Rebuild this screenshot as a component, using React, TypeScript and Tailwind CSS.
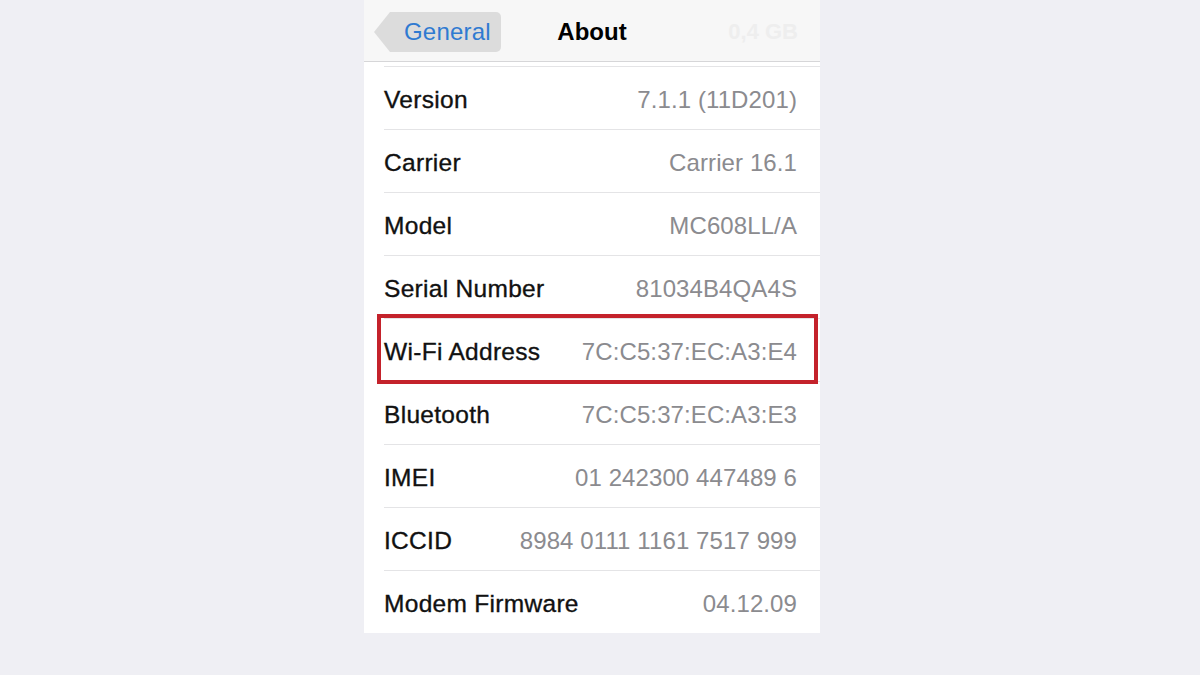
const rows = [
  { label: "Version", value: "7.1.1 (11D201)" },
  { label: "Carrier", value: "Carrier 16.1" },
  { label: "Model", value: "MC608LL/A" },
  { label: "Serial Number", value: "81034B4QA4S" },
  { label: "Wi-Fi Address", value: "7C:C5:37:EC:A3:E4", marked: true },
  { label: "Bluetooth", value: "7C:C5:37:EC:A3:E3" },
  { label: "IMEI", value: "01 242300 447489 6" },
  { label: "ICCID", value: "8984 0111 1161 7517 999" },
  { label: "Modem Firmware", value: "04.12.09" },
];

function BackButton() {
  return (
    <div className="flex items-center">
      <div className="w-0 h-0 border-y-[20px] border-y-transparent border-r-[16px] border-r-[#dcdcdc]" />
      <div className="h-[40px] w-[111px] rounded-r-[5px] bg-[#dcdcdc] flex items-center pl-[14px] text-[24px] tracking-[0.2px] text-[#2f7ad1]">
        General
      </div>
    </div>
  );
}

export default function App() {
  return (
    <div className="min-h-[675px] w-[1200px] bg-[#efeff4] font-['Liberation_Sans',Arial,sans-serif]">
      <div className="ml-[364px] w-[456px]">
        <header className="h-[62px] grid grid-cols-[1fr_auto_1fr] items-center pt-[2px] bg-[#f7f7f7] border-b border-[#d6d6d8]">
          <div className="pl-[10px]">
            <BackButton />
          </div>
          <h1 className="text-[24px] font-bold text-black">About</h1>
          <div className="text-right pr-[22px] text-[22px] font-bold text-[#eeeeee]">0,4 GB</div>
        </header>

        <div className="bg-white pt-[4px]">
          <div className="ml-[20px] h-px bg-[#e4e4e6]" />
          {rows.map((row, index) => (
            <div key={row.label} className="relative">
              <div className="h-[62px] flex items-center justify-between pt-[4px] pl-[20px] pr-[23px] text-[24px]">
                <span className="text-[24.5px] tracking-[0.3px] text-[#111] [-webkit-text-stroke:0.35px_#111]">
                  {row.label}
                </span>
                <span className="text-[#8b8b8f] tracking-[0.1px]">{row.value}</span>
              </div>
              {index < rows.length - 1 && <div className="ml-[20px] h-px bg-[#e4e4e6]" />}
              {row.marked && (
                <div className="absolute left-[13px] right-[2px] top-[-5px] bottom-[-2px] border-[4px] border-[#c4222b]" />
              )}
            </div>
          ))}
        </div>
      </div>
    </div>
  );
}
